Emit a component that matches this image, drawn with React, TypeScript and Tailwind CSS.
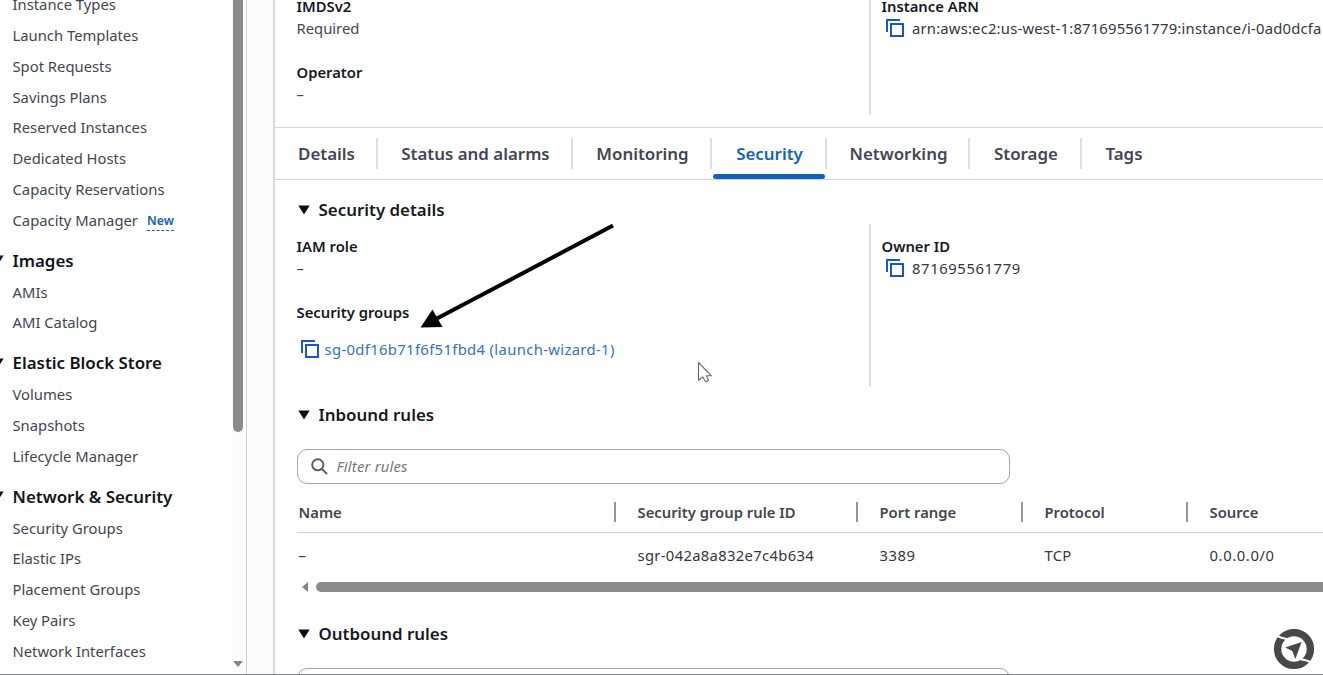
type NavItem = { label: string; isNew?: boolean };
type NavGroup = { title?: string; items: NavItem[] };

const navGroups: NavGroup[] = [
  {
    items: [
      { label: 'Instance Types' },
      { label: 'Launch Templates' },
      { label: 'Spot Requests' },
      { label: 'Savings Plans' },
      { label: 'Reserved Instances' },
      { label: 'Dedicated Hosts' },
      { label: 'Capacity Reservations' },
      { label: 'Capacity Manager', isNew: true },
    ],
  },
  { title: 'Images', items: [{ label: 'AMIs' }, { label: 'AMI Catalog' }] },
  {
    title: 'Elastic Block Store',
    items: [{ label: 'Volumes' }, { label: 'Snapshots' }, { label: 'Lifecycle Manager' }],
  },
  {
    title: 'Network & Security',
    items: [
      { label: 'Security Groups' },
      { label: 'Elastic IPs' },
      { label: 'Placement Groups' },
      { label: 'Key Pairs' },
      { label: 'Network Interfaces' },
    ],
  },
];

const tabs = [
  { label: 'Details', width: 'w-[103px]' },
  { label: 'Status and alarms', width: 'w-[195px]' },
  { label: 'Monitoring', width: 'w-[139px]' },
  { label: 'Security', width: 'w-[115px]', active: true },
  { label: 'Networking', width: 'w-[143px]' },
  { label: 'Storage', width: 'w-[112px]' },
  { label: 'Tags', width: 'w-[84px]' },
];

const columns = [
  { label: 'Name', value: '–', width: 'w-[319px]', pad: 'pl-[2px]', track: '' },
  { label: 'Security group rule ID', value: 'sgr-042a8a832e7c4b634', width: 'w-[242px]', pad: 'pl-[22px]', track: 'tracking-[0.32px]' },
  { label: 'Port range', value: '3389', width: 'w-[165px]', pad: 'pl-[22px]', track: 'tracking-[0.5px]' },
  { label: 'Protocol', value: 'TCP', width: 'w-[165px]', pad: 'pl-[22px]', track: 'tracking-[0.2px]' },
  { label: 'Source', value: '0.0.0.0/0', width: 'w-[165px]', pad: 'pl-[22px]', track: 'tracking-[0.6px]' },
];

function CopyIcon() {
  return (
    <svg width="18" height="18" viewBox="0 0 18 18" fill="none" stroke="#1a56c4" strokeWidth="2" className="shrink-0">
      <path d="M1 13V1H14" />
      <path d="M5 5H17V17H5Z" />
    </svg>
  );
}

function Caret() {
  return (
    <svg width="12" height="10" viewBox="0 0 12 10" className="shrink-0">
      <path d="M0.3 0.5H11.7L6 9.5Z" fill="#0b0f14" />
    </svg>
  );
}

function SectionTitle({ children }: { children: string }) {
  return (
    <h2 className="flex h-[26px] items-center gap-[9px] pl-[1px] text-[16.9px] font-semibold text-[#16191f]">
      <Caret />
      {children}
    </h2>
  );
}

function Label({ children }: { children: string }) {
  return <div className="h-[22px] text-[14.8px] font-semibold leading-[22px] text-[#16191f]">{children}</div>;
}

function Sidebar() {
  return (
    <aside className="flex h-full w-[247px] shrink-0 border-r border-[#d2d3d8] bg-white">
      <nav className="-mt-[10.4px] w-[231px]">
        {navGroups.map((group, index) => (
          <div key={index}>
            {group.title && (
              <div className="flex h-[41px] items-center pt-2">
                <div className="-ml-[8px] mr-[8.5px]">
                  <Caret />
                </div>
                <span className="whitespace-nowrap text-[16.9px] font-semibold text-[#0f141a]">{group.title}</span>
              </div>
            )}
            {group.items.map((item) => (
              <div key={item.label} className="flex h-[30.8px] items-center pb-[1.4px] pl-[12.5px] text-[14.8px] text-[#424650]">
                {item.label}
                {item.isNew && (
                  <span className="ml-[9px] mt-[3px] border-b border-dashed border-[#0f62c0] text-[12.3px] font-semibold leading-[18px] text-[#0f62c0]">
                    New
                  </span>
                )}
              </div>
            ))}
          </div>
        ))}
      </nav>
      <div className="flex flex-1 flex-col justify-between bg-[#fcfcfc]">
        <div className="ml-[1.5px] h-[432px] w-[10px] rounded-b-full bg-[#8b8b8b]" />
        <svg width="10" height="6" viewBox="0 0 10 6" className="mb-[8px] ml-[2px]">
          <path d="M0 0H10L5 6Z" fill="#858585" />
        </svg>
      </div>
    </aside>
  );
}

function Tabs() {
  return (
    <div className="flex h-[53px] border-y-[1.5px] border-[#d3d4d8]">
      {tabs.map((tab, index) => (
        <div key={tab.label} className={`relative flex shrink-0 items-center justify-center ${tab.width}`}>
          <span className={`whitespace-nowrap pt-[1px] text-[16.9px] font-semibold ${tab.active ? 'text-[#0f62c0]' : 'text-[#424650]'}`}>
            {tab.label}
          </span>
          {index < tabs.length - 1 && <span className="absolute right-0 top-[10px] h-[31px] w-[2px] bg-[#dddee0]" />}
          {tab.active && <span className="absolute bottom-0 left-[1px] right-[2px] h-[5px] rounded-sm bg-[#0f62c0]" />}
        </div>
      ))}
    </div>
  );
}

function RulesTable() {
  return (
    <div className="w-[1056px]">
      <div className="flex h-[41px] items-center border-b-[1.5px] border-[#cfd0d4]">
        {columns.map((col, index) => (
          <div key={col.label} className={`flex shrink-0 items-center justify-between ${col.width} ${col.pad}`}>
            <span className="text-[14.8px] font-semibold text-[#424650]">{col.label}</span>
            {index < columns.length - 1 && <span className="h-[20px] w-[2px] bg-[#94969b]" />}
          </div>
        ))}
      </div>
      <div className="flex h-[45px] items-center">
        {columns.map((col) => (
          <div key={col.label} className={`shrink-0 text-[14.8px] text-[#33373f] ${col.width} ${col.pad} ${col.track}`}>
            {col.value}
          </div>
        ))}
      </div>
      <div className="mt-[4px] flex h-[10px] items-center">
        <svg width="6" height="10" viewBox="0 0 6 10" className="ml-[5px] mr-[8px]">
          <path d="M6 0V10L0 5Z" fill="#858585" />
        </svg>
        <div className="h-[10px] flex-1 rounded-l-full bg-[#8b8b8b]" />
      </div>
    </div>
  );
}

export default function App() {
  return (
    <div className="relative flex h-[675px] w-[1323px] overflow-hidden bg-[#fbfbfc] font-['Noto_Sans','Open_Sans',sans-serif]">
      <Sidebar />
      <main className="ml-[26px] w-[1050px] shrink-0 overflow-hidden border-l-2 border-[#dadbdf] bg-white">
        <div className="flex h-[127px] overflow-hidden pl-[21.5px]">
          <div className="w-[572px] shrink-0">
            <div className="-mt-[5px]">
              <Label>IMDSv2</Label>
              <div className="h-[22px] text-[14.8px] leading-[22px] text-[#424650]">Required</div>
            </div>
            <div className="mt-[22px]">
              <Label>Operator</Label>
              <div className="h-[22px] text-[14.8px] leading-[22px] text-[#424650]">–</div>
            </div>
          </div>
          <div className="h-[115px] border-l-2 border-[#dddee0] pl-[11px]">
            <div className="-mt-[5px]">
              <Label>Instance ARN</Label>
              <div className="flex h-[22px] items-center gap-[8.5px] whitespace-nowrap pl-1 text-[14.8px] tracking-[0.2px] text-[#33373f]">
                <CopyIcon />
                arn:aws:ec2:us-west-1:871695561779:instance/i-0ad0dcfa
              </div>
            </div>
          </div>
        </div>

        <Tabs />

        <div className="pl-[21.5px] pt-[17px]">
          <SectionTitle>Security details</SectionTitle>
          <div className="mt-[1px] flex h-[162px]">
            <div className="w-[572px] pt-[11px]">
              <Label>IAM role</Label>
              <div className="h-[22px] text-[14.8px] leading-[22px] text-[#424650]">–</div>
              <div className="mt-[22px]">
                <Label>Security groups</Label>
              </div>
              <div className="mt-[15px] flex h-[22px] items-center gap-[6px] pl-1 text-[14.8px] tracking-[0.35px] text-[#2f74bf]">
                <CopyIcon />
                sg-0df16b71f6f51fbd4 (launch-wizard-1)
              </div>
            </div>
            <div className="border-l-2 border-[#dddee0] pl-[11px] pt-[11px]">
              <Label>Owner ID</Label>
              <div className="flex h-[22px] items-center gap-[8.5px] pl-1 text-[14.8px] tracking-[0.6px] text-[#33373f]">
                <CopyIcon />
                871695561779
              </div>
            </div>
          </div>

          <div className="mt-4">
            <SectionTitle>Inbound rules</SectionTitle>
            <div className="mt-[21px] flex h-[35px] w-[713px] items-center gap-[9px] rounded-[10px] border-[1.5px] border-[#a4a6ab] pl-[13px]">
              <svg width="17" height="17" viewBox="0 0 17 17" fill="none" stroke="#565a63" strokeWidth="1.9">
                <circle cx="6.8" cy="6.8" r="5.6" />
                <path d="M10.9 10.9L16 16" />
              </svg>
              <span className="text-[14.8px] italic tracking-[0.2px] text-[#73777f]">Filter rules</span>
            </div>
            <div className="mt-2">
              <RulesTable />
            </div>
          </div>

          <div className="mt-[29px]">
            <SectionTitle>Outbound rules</SectionTitle>
            <div className="mt-[21px] h-[35px] w-[713px] rounded-[10px] border-[1.5px] border-[#a4a6ab]" />
          </div>
        </div>
      </main>

      {/* pointer and annotation arrow */}
      <svg width="200" height="110" viewBox="0 0 200 110" className="absolute left-[418px] top-[222px]">
        <path d="M195 3.5L18 97" stroke="#000" strokeWidth="4" />
        <path d="M2.5 105.5L14.5 87.5L24.5 105Z" fill="#000" />
      </svg>
      <svg width="16" height="22" viewBox="0 0 16 22" className="absolute left-[697px] top-[361px]">
        <path
          d="M1.5 1.5V19.3L5.8 15.9L8.6 20.8L11.6 19.6L9.4 14.7H14.2Z"
          fill="#fff"
          stroke="#66686d"
          strokeWidth="1.1"
          strokeLinejoin="round"
        />
      </svg>

      <svg width="42" height="42" viewBox="0 0 42 42" className="absolute left-[1273px] top-[628px]">
        <circle cx="21" cy="21" r="16.4" fill="#fff" stroke="#484848" strokeWidth="7.4" />
        <path d="M2 6.6C6 9 9.5 10.6 14.5 10.9M27.5 31.2C32 31.6 36 33 40 35.6" fill="none" stroke="#fff" strokeWidth="2" />
        <path d="M28.6 14L12.2 19.5L19.2 23L22.3 31Z" fill="#484848" />
      </svg>
      <div className="absolute inset-x-0 bottom-0 h-px bg-[#85868a]" />
    </div>
  );
}
